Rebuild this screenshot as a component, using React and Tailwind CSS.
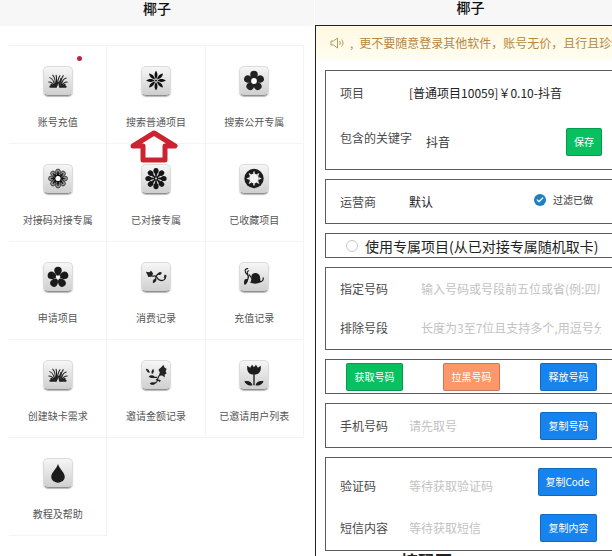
import { Check } from "lucide-react";

const ring = (count, offset = 0) =>
  Array.from({ length: count }, (_, i) => offset + (360 / count) * i);

function Grass() {
  return (
    <g fill="none" stroke="#222" strokeWidth="1.1" strokeLinecap="round">
      <path d="M11 20C10 17 8 15.500 5.500 15.500M11.500 20C11 15 9 12 6.500 11M12 20C12.500 15 11.500 10.500 9.500 8.500M13 20C13.500 16 14 12 13 8.500M14 19C14.500 15 15 12 17 9" />
      <path d="M19 20C20 17 22 15.500 24.500 15.500M18.500 20C19 15 21 12 23.500 11.500M18 20C17.500 15 18.500 11.500 20.500 9M16.500 19C16.500 16 17 14 18 12" />
      <path d="M7 20.500h6M17 20.500h6M8 18.500l4 2M22 18.500l-4 2" strokeWidth="2" />
      <path d="M13 20l1-4M17 20l-1-4" strokeWidth="2" />
    </g>
  );
}

function Star() {
  return (
    <g fill="#111">
      {ring(8).map((a) => (
        <path key={a} d="M15 12.500C12.600 9 13.400 6 15 3.800C16.600 6 17.400 9 15 12.500Z" transform={`rotate(${a} 15 14)`} />
      ))}
      <circle cx="15" cy="14" r="1" />
    </g>
  );
}

function RoundFlower() {
  return (
    <g fill="#222">
      {ring(5).map((a) => (
        <circle key={a} cx="15" cy="7.800" r="3.900" transform={`rotate(${a} 15 14.500)`} />
      ))}
      <circle cx="15" cy="14.500" r="5" />
      <circle cx="15" cy="14.500" r="3" fill="#fff" />
    </g>
  );
}

function Daisy() {
  return (
    <g>
      {ring(8).map((a) => (
        <g key={a} transform={`rotate(${a} 15 14)`}>
          <ellipse cx="15" cy="7" rx="2.500" ry="2.800" fill="#999" stroke="#333" strokeWidth="0.900" />
          <path d="M15 6.500L16.300 11.500H13.700Z" fill="#111" stroke="#111" strokeWidth="0.700" />
        </g>
      ))}
      <circle cx="15" cy="14" r="2.600" fill="#fff" />
    </g>
  );
}

function Blossom() {
  return (
    <g fill="#161616">
      {ring(8).map((a) => (
        <g key={a} transform={`rotate(${a} 15 14)`}>
          <ellipse cx="15" cy="6" rx="2.700" ry="3" />
          <path d="M15 7v5" stroke="#161616" strokeWidth="2.400" />
        </g>
      ))}
      <circle cx="15" cy="14" r="4" />
      {ring(8, 22).map((a) => (
        <path key={a} d="M15 11.500v-2" stroke="#ddd" strokeWidth="0.900" transform={`rotate(${a} 15 14)`} />
      ))}
      <circle cx="15" cy="14" r="1" fill="#ddd" />
    </g>
  );
}

function Wheel() {
  return (
    <g>
      <circle cx="15" cy="14" r="10" fill="#1c1c1c" />
      {ring(8).map((a) => (
        <path key={a} d="M15 6L16.200 9H13.800Z" fill="#f4f4f4" transform={`rotate(${a} 15 14)`} />
      ))}
      <circle cx="15" cy="14" r="5" fill="#f4f4f4" />
    </g>
  );
}

function PetalFlower() {
  return (
    <g fill="#1a1a1a">
      {ring(5).map((a) => (
        <path key={a} d="M14 13C10 10 10 4 15 4C20 4 20 10 16 13Z" transform={`rotate(${a} 15 15)`} />
      ))}
      <path d="M12.500 13.500h5l-2.500 4z" fill="#fff" />
    </g>
  );
}

function Sprig() {
  return (
    <g fill="#222">
      <path d="M4.500 9L8 9.500L10 8L12 11L10.500 14L7 14.500L6 12Z" />
      <path d="M8 12C12 16 14 11 16 15C18 19 24 20 25 14" fill="none" stroke="#222" strokeWidth="1.300" />
      <path d="M20 10C16 11 15 13 14 19" fill="none" stroke="#222" strokeWidth="1.300" />
      <path d="M12 21C11 18 13 16 15.500 16.500C16 18.500 14 20 12 21ZM17 12C17 10 19 9 21 10C20.500 12 18.500 13 17 12ZM24 12l2 1-1 3-2-1z" />
    </g>
  );
}

function Vine() {
  return (
    <g fill="#1c1c1c">
      <path d="M9 6C5 5 5 10 8 12C11 14 8 18 6 22M10 8C8 8 7 10 9 12" fill="none" stroke="#1c1c1c" strokeWidth="1.200" />
      <path d="M5 18C6 16 8 16 8.500 18C8.500 21 6 21 5.500 23C4.500 21 4.500 19 5 18Z" />
      <path d="M12.500 13C13 10 18 9.500 20 12C22 14 21 17 22 20C18 22 14 21.500 11 20.500C13 18 11.500 16 12.500 13Z" />
      <path d="M20 19C23 20 25 18 24.500 15M10 12l2 3" fill="none" stroke="#1c1c1c" strokeWidth="1.300" />
    </g>
  );
}

function Rose() {
  return (
    <g fill="#222">
      <path d="M21 6L22.500 4L24 7L26 8L25 11L26 13L24 14L24 17L21.500 15L18 15L19 12L17.500 9Z" />
      <path d="M20 14C17 15 17 18 16 21C15 23 12 24 10 23.500M16 17H10M15 19L19 21" fill="none" stroke="#222" strokeWidth="1.200" />
      <path d="M4.500 8C7 8 8.500 10 8.500 12.500C6 12 5 10 4.500 8ZM12 8C13.500 10 13 12 11 13.500C9.500 12 10.500 10 12 8ZM7.500 16C9 14.500 12 14.500 13.500 16C12 18 9 18 7.500 16ZM8.500 23.500C10 21.500 13 21.500 14.500 23C13 25 10 25 8.500 23.500ZM17 19l3 1-1 2z" />
    </g>
  );
}

function Tulip() {
  return (
    <g fill="#1c1c1c">
      <path d="M8 5L11 7L13 4L15 6.500L17 4L19 7L22 5C22.500 10 21 13.500 16.500 14H13.500C9 13.500 7.500 10 8 5Z" />
      <path d="M14.300 13h1.400v12h-1.400z" />
      <path d="M5 21C9 20 12 21 13.500 25C9.500 26 6.500 24.500 5 21ZM25 21C21 20 18 21 16.500 25C20.500 26 23.500 24.500 25 21Z" />
    </g>
  );
}

function Drop() {
  return (
    <path d="M15 5C16 10 22 14 22 18.500C22 22 19 24.500 15 24.500C11 24.500 8 22 8 18.500C8 14 14 10 15 5Z" fill="#1c1c1c" />
  );
}

const menu = [
  { label: "账号充值", Icon: Grass, dot: true },
  { label: "搜索普通项目", Icon: Star, arrow: true },
  { label: "搜索公开专属", Icon: RoundFlower },
  { label: "对接码对接专属", Icon: Daisy },
  { label: "已对接专属", Icon: Blossom },
  { label: "已收藏项目", Icon: Wheel },
  { label: "申请项目", Icon: PetalFlower },
  { label: "消费记录", Icon: Sprig },
  { label: "充值记录", Icon: Vine },
  { label: "创建缺卡需求", Icon: Grass },
  { label: "邀请金额记录", Icon: Rose },
  { label: "已邀请用户列表", Icon: Tulip },
  { label: "教程及帮助", Icon: Drop },
];

function MenuItem({ label, Icon, dot, arrow }) {
  return (
    <a href="#" className="relative flex h-[98px] flex-col items-center border-r border-b border-[#f4f4f4] pt-5">
      <span className="h-[30px] w-[30px] rounded-[5px] border border-[#dcdcdc] border-b-[#8f8f8f] bg-linear-to-b from-[#f6f6f6] to-[#cfcfcf] shadow-[0_1px_1px_#bbb]">
        <svg viewBox="1 0 28 29" className="h-7 w-7">
          <Icon />
        </svg>
      </span>
      <span className="mt-[18px] text-[10px] leading-4 whitespace-nowrap text-[#555]">{label}</span>
      {dot && <span className="absolute top-[10px] right-6 h-[5px] w-[5px] rounded-full bg-[#bd2440]" />}
      {arrow && (
        <svg viewBox="0 0 50 34" className="absolute top-[83px] left-[22px] z-10 h-[34px] w-[50px]">
          <path d="M25 4L46 17H36V31H14V17H4Z" fill="#fff" stroke="#cb2431" strokeWidth="5" strokeLinejoin="round" />
        </svg>
      )}
    </a>
  );
}

function MenuScreen() {
  return (
    <section className="border-r border-white bg-white">
      <header className="h-[26px] bg-[#f7f7f7]">
        <h1 className="text-center text-[14px] leading-4 font-medium text-[#111]">椰子</h1>
      </header>
      <nav className="mt-[19px] mr-[10px] ml-[9px] grid grid-cols-3 border-t border-[#f4f4f4]">
        {menu.map((item) => (
          <MenuItem key={item.label} {...item} />
        ))}
      </nav>
    </section>
  );
}

function Card({ children, className = "" }) {
  return <div className={`border border-r-0 border-[#5c5c5c] pl-[14px] ${className}`}>{children}</div>;
}

function Button({ children, className }) {
  return (
    <button className={`h-7 shrink-0 rounded-[2px] border border-black/20 text-[10px] leading-4 text-white ${className}`}>
      {children}
    </button>
  );
}

const inputClass = "min-w-0 flex-1 bg-transparent leading-5 text-[#333] outline-none placeholder:text-[#c2c2c2]";

function OrderScreen() {
  return (
    <section className="flex min-w-0 flex-col">
      <header className="h-[25px] shrink-0 bg-[#f7f7f7]">
        <h1 className="pl-[14px] text-center text-[14px] leading-[14px] font-medium text-[#111]">椰子</h1>
      </header>
      <main className="flex-1 border-t border-l border-[#222] text-[12px] text-[#4a4a4a]">
        <div className="flex h-[34px] items-center overflow-hidden bg-linear-to-b from-[#fff9e3] to-[#fffdf0] pl-[14px] whitespace-nowrap text-[#b8873f]">
          <svg viewBox="0 0 14 12" className="mr-[6px] h-3 w-[14px] shrink-0" fill="none" stroke="#b09a5c" strokeWidth="1">
            <path d="M1 4H3.500L7.500 1V11L3.500 8H1ZM9.500 4C10.500 5 10.500 7 9.500 8M11.500 2.500C13.500 4.500 13.500 7.500 11.500 9.500" />
          </svg>
          <span className="mr-[6px]">,</span>
          <span>更不要随意登录其他软件，账号无价，且行且珍惜</span>
        </div>

        <div className="mt-[10px] ml-[9px] flex flex-col gap-[9px]">
          <Card className="pr-[10px]">
            <div className="flex h-11 items-center">
              <span className="w-[69px]">项目</span>
              <span className="whitespace-nowrap text-[#222]">[普通项目10059]￥0.10-抖音</span>
            </div>
            <div className="flex h-[54px] items-center">
              <label htmlFor="keyword" className="w-[86px] shrink-0 pb-2">包含的关键字</label>
              <input id="keyword" defaultValue="抖音" className={inputClass} />
              <Button className="w-9 bg-[#07c160]">保存</Button>
            </div>
          </Card>

          <Card className="flex h-[45px] items-center pr-[19px]">
            <label htmlFor="carrier" className="w-[69px] shrink-0">运营商</label>
            <select id="carrier" className="min-w-0 flex-1 appearance-none bg-transparent text-[#222] outline-none">
              <option>默认</option>
            </select>
            <label className="relative flex items-center gap-[7px] pb-1 text-[10px] text-[#333]">
              <input type="checkbox" defaultChecked className="h-3 w-3 appearance-none rounded-full bg-[#1d7fc4]" />
              <Check className="pointer-events-none absolute left-[2px] h-2 w-2 text-white" strokeWidth={4} />
              过滤已做
            </label>
          </Card>

          <Card className="flex h-[25px] items-center">
            <label className="ml-[6px] flex items-center gap-[7px] text-[14px] leading-5 whitespace-nowrap text-[#222]">
              <input type="radio" name="exclusive" className="h-3 w-3 appearance-none rounded-full border border-[#c8c8c8] bg-white" />
              使用专属项目(从已对接专属随机取卡)
            </label>
          </Card>

          <Card className="py-[2px] pr-[11px]">
            <div className="flex h-[38px] items-center">
              <label htmlFor="number" className="w-[81px] shrink-0">指定号码</label>
              <input id="number" placeholder="输入号码或号段前五位或省(例:四川)" className={inputClass} />
            </div>
            <div className="flex h-[39px] items-center">
              <label htmlFor="exclude" className="w-[81px] shrink-0">排除号段</label>
              <input id="exclude" placeholder="长度为3至7位且支持多个,用逗号分隔" className={inputClass} />
            </div>
          </Card>

          <Card className="flex h-[35px] items-center justify-between pr-[15px]">
            <Button className="ml-[6px] w-[57px] bg-[#07c160]">获取号码</Button>
            <Button className="w-[57px] bg-[#fb976b]">拉黑号码</Button>
            <Button className="w-[57px] bg-[#1683ee]">释放号码</Button>
          </Card>

          <Card className="flex h-[45px] items-center pr-[15px]">
            <label htmlFor="phone" className="w-[69px] shrink-0">手机号码</label>
            <input id="phone" placeholder="请先取号" className={inputClass} />
            <Button className="w-[57px] bg-[#1683ee]">复制号码</Button>
          </Card>

          <Card className="pr-[15px]">
            <div className="flex h-12 items-center">
              <label htmlFor="code" className="w-[69px] shrink-0 pt-2">验证码</label>
              <input id="code" placeholder="等待获取验证码" className={`${inputClass} pt-2`} />
              <Button className="w-[59px] bg-[#1683ee]">复制Code</Button>
            </div>
            <div className="flex h-11 items-center">
              <label htmlFor="message" className="w-[69px] shrink-0">短信内容</label>
              <input id="message" placeholder="等待获取短信" className={inputClass} />
              <Button className="w-[57px] bg-[#1683ee]">复制内容</Button>
            </div>
          </Card>
        </div>
        <p className="mt-[2px] pl-[85px] text-[17px] leading-4 font-bold text-[#222]">接码页</p>
      </main>
    </section>
  );
}

export default function App() {
  return (
    <div className="grid h-screen grid-cols-[315fr_297fr] overflow-hidden bg-white font-['Noto_Sans_CJK_SC',sans-serif]">
      <MenuScreen />
      <OrderScreen />
    </div>
  );
}
